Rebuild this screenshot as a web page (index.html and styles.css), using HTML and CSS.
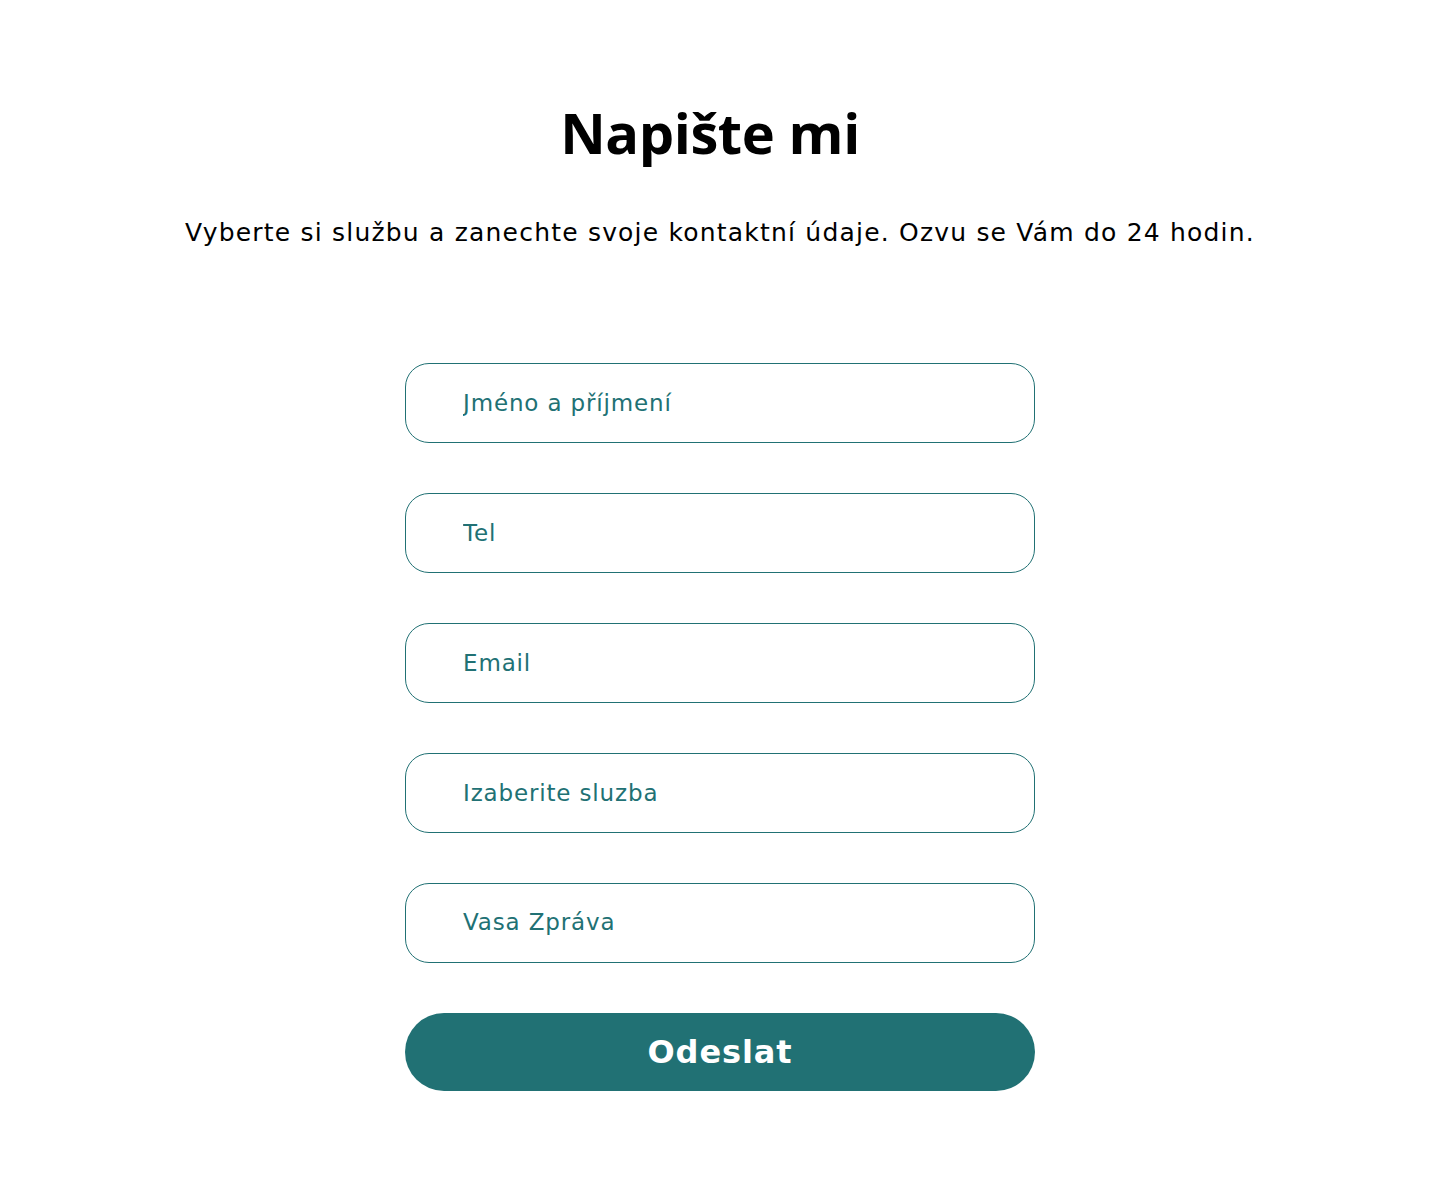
FILE: index.html
```html
<!DOCTYPE html>
<html lang="cs">
<head>
    <meta charset="UTF-8">
    <meta name="viewport" content="width=device-width, initial-scale=1.0">
    <title>Napište mi</title>
    <link rel="stylesheet" href="styles.css">
</head>
<body>

    <section class="contact">
        <h1>Napište mi</h1>
        <p class="lead">Vyberte si službu a zanechte svoje kontaktní údaje. Ozvu se Vám do 24 hodin.</p>

        <form class="contact-form" onsubmit="return false;">
            <input class="field" type="text" placeholder="Jméno a příjmení">
            <input class="field" type="tel" placeholder="Tel">
            <input class="field" type="email" placeholder="Email">
            <select class="field field-select">
                <option>Izaberite sluzba</option>
            </select>
            <textarea class="field field-area" placeholder="Vasa Zpráva"></textarea>
            <button class="btn-send" type="submit">Odeslat</button>
        </form>
    </section>

</body>
</html>
```

FILE: styles.css
```css
body {
    margin: 0;
    background: #fff;
    color: #000;
    font-family: "DejaVu Sans", sans-serif;
}
.contact {
    display: flex;
    flex-direction: column;
    align-items: center;
    padding-top: 96px;
    padding-bottom: 100px;
}
h1 {
    margin: 0;
    font-family: "Open Sans", sans-serif;
    font-weight: 700;
    font-size: 56px;
    line-height: 72px;
    letter-spacing: -0.4px;
    transform: translateX(-10px);
}
.lead {
    margin: 47px 0 0;
    font-size: 25px;
    line-height: 36px;
    font-weight: 400;
    letter-spacing: 1.2px;
}
.contact-form {
    margin-top: 112px;
    width: 630px;
    display: flex;
    flex-direction: column;
    gap: 50px;
}
.field {
    box-sizing: border-box;
    width: 100%;
    height: 80px;
    margin: 0;
    padding: 0 20px 0 57px;
    border: 1px solid #217174;
    border-radius: 24px;
    background: #fff;
    color: #217174;
    font-family: "DejaVu Sans", sans-serif;
    font-size: 23px;
    letter-spacing: 0.85px;
    outline: none;
}
.field::placeholder {
    color: #217174;
    opacity: 1;
}
.field-select {
    appearance: none;
    -webkit-appearance: none;
}
.field-area {
    resize: none;
    padding-top: 22px;
    line-height: 32px;
}
.btn-send {
    height: 78px;
    margin-top: 0;
    border: none;
    border-radius: 39px;
    background: #217174;
    color: #fff;
    font-family: "DejaVu Sans", sans-serif;
    font-weight: 700;
    font-size: 32px;
    letter-spacing: 0.9px;
    cursor: pointer;
}
```
